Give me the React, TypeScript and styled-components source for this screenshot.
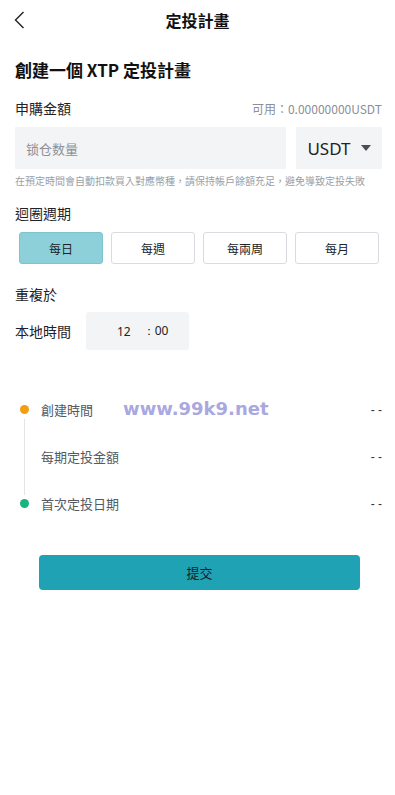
import { useState } from "react";
import styled, { createGlobalStyle } from "styled-components";

const GlobalStyle = createGlobalStyle`
  body {
    margin: 0;
    background: #ffffff;
    font-family: "Noto Sans CJK TC", "Noto Sans", sans-serif;
    color: #1f2329;
  }
`;

const Page = styled.div`
  width: 395px;
  min-height: 795px;
  background: #fff;
`;

const Header = styled.header`
  height: 40px;
  display: flex;
  align-items: center;
  justify-content: center;
  position: relative;
`;

const BackButton = styled.button`
  position: absolute;
  left: 8px;
  top: 8px;
  width: 24px;
  height: 24px;
  padding: 0;
  border: none;
  background: none;
  display: flex;
  align-items: center;
  justify-content: center;
`;

const Title = styled.h1`
  margin: 0;
  font-size: 16px;
  font-weight: 700;
  color: #111;
`;

const Body = styled.div`
  padding: 0 13px 0 15px;
  display: flex;
  flex-direction: column;
`;

const Heading = styled.h2`
  margin: 17px 0 0;
  font-size: 17px;
  font-weight: 700;
  line-height: 26px;
  color: #111;
`;

const LabelRow = styled.div<{ $top: number }>`
  display: flex;
  justify-content: space-between;
  align-items: center;
  margin-top: ${(p) => p.$top}px;
  height: 22px;
`;

const Label = styled.span`
  font-size: 14px;
  color: #1f2329;
`;

const Available = styled.span`
  font-size: 12px;
  color: #8a8f99;
`;

const InputRow = styled.div`
  display: flex;
  gap: 10px;
  margin-top: 8px;
`;

const AmountInput = styled.input`
  flex: 1;
  height: 42px;
  box-sizing: border-box;
  border: none;
  outline: none;
  background: #f3f4f6;
  padding: 0 11px;
  font-size: 13px;
  font-family: inherit;
  color: #333;
  &::placeholder {
    color: #8d9096;
  }
`;

const CurrencySelect = styled.div`
  width: 86px;
  height: 42px;
  background: #f3f4f6;
  display: flex;
  align-items: center;
  justify-content: center;
  gap: 10px;
  font-size: 17px;
  font-family: "Noto Sans", sans-serif;
  color: #222;
`;

const Caret = styled.span`
  width: 0;
  height: 0;
  border-left: 5px solid transparent;
  border-right: 5px solid transparent;
  border-top: 6px solid #4a4f57;
`;

const Hint = styled.p`
  margin: 5px 0 0;
  font-size: 10px;
  color: #9a9ea5;
  line-height: 14px;
  white-space: nowrap;
`;

const PeriodRow = styled.div`
  display: grid;
  grid-template-columns: repeat(4, 84px);
  gap: 8px;
  margin-top: 8px;
  padding-left: 4px;
`;

const PeriodButton = styled.button<{ $active: boolean }>`
  height: 32px;
  box-sizing: border-box;
  border-radius: 3px;
  border: 1px solid ${(p) => (p.$active ? "#7fc3ce" : "#d9dbe0")};
  background: ${(p) => (p.$active ? "#8dd0da" : "#fff")};
  font-size: 12px;
  font-family: inherit;
  color: #222;
  padding: 0;
`;

const TimeRow = styled.div`
  display: flex;
  align-items: center;
  gap: 15px;
  margin-top: 7px;
`;

const TimeBox = styled.div`
  width: 103px;
  height: 38px;
  background: #f3f4f6;
  border-radius: 3px;
  display: flex;
  align-items: center;
  font-size: 12px;
  font-family: "Noto Sans", sans-serif;
  color: #222;
  padding-left: 31px;
  box-sizing: border-box;
  gap: 12px;
`;

const Timeline = styled.div`
  margin-top: 36px;
  display: flex;
  flex-direction: column;
`;

const TimelineItem = styled.div`
  height: 47px;
  display: flex;
  align-items: center;
  position: relative;
  padding-left: 26px;
`;

const Dot = styled.span<{ $color: string }>`
  position: absolute;
  left: 5px;
  top: 50%;
  width: 9px;
  height: 9px;
  margin-top: -4.5px;
  border-radius: 50%;
  background: ${(p) => p.$color};
`;

const Line = styled.span`
  position: absolute;
  left: 9px;
  top: 33px;
  height: 76px;
  width: 1px;
  background: #e3e4e8;
`;

const ItemLabel = styled.span`
  font-size: 13px;
  color: #555a62;
  flex: 1;
`;

const ItemValue = styled.span`
  font-size: 12px;
  font-family: "Liberation Sans", sans-serif;
  color: #333;
  white-space: pre;
`;

const Watermark = styled.span`
  position: absolute;
  left: 108px;
  top: 50%;
  transform: translateY(-55%);
  font-family: "DejaVu Sans", sans-serif;
  font-weight: 700;
  font-size: 18px;
  color: #a9a8e0;
`;

const SubmitButton = styled.button`
  margin: 28px 22px 0 24px;
  height: 35px;
  border: none;
  border-radius: 4px;
  background: #1fa2b3;
  color: #1b1b1b;
  font-size: 13px;
  font-family: inherit;
`;

const periods = ["每日", "每週", "每兩周", "每月"];

export default function App() {
  const [period, setPeriod] = useState(0);

  return (
    <Page>
      <GlobalStyle />
      <Header>
        <BackButton aria-label="back">
          <svg width="14" height="20" viewBox="0 0 14 20">
            <path d="M10.5 2 L2.5 10 L10.5 18" fill="none" stroke="#222" strokeWidth="1.4" />
          </svg>
        </BackButton>
        <Title>定投計畫</Title>
      </Header>
      <Body>
        <Heading>創建一個 XTP 定投計畫</Heading>

        <LabelRow $top={14}>
          <Label>申購金額</Label>
          <Available>可用：0.00000000USDT</Available>
        </LabelRow>
        <InputRow>
          <AmountInput placeholder="锁仓数量" />
          <CurrencySelect>
            USDT
            <Caret />
          </CurrencySelect>
        </InputRow>
        <Hint>在預定時間會自動扣款買入對應幣種，請保持帳戶餘額充足，避免導致定投失敗</Hint>

        <LabelRow $top={14}>
          <Label>迴圈週期</Label>
        </LabelRow>
        <PeriodRow>
          {periods.map((p, i) => (
            <PeriodButton key={p} $active={i === period} onClick={() => setPeriod(i)}>
              {p}
            </PeriodButton>
          ))}
        </PeriodRow>

        <LabelRow $top={19}>
          <Label>重複於</Label>
        </LabelRow>
        <TimeRow>
          <Label>本地時間</Label>
          <TimeBox>
            <span>12</span>
            <span>：00</span>
          </TimeBox>
        </TimeRow>

        <Timeline>
          <TimelineItem>
            <Dot $color="#f29d12" />
            <Line />
            <ItemLabel>創建時間</ItemLabel>
            <Watermark>www.99k9.net</Watermark>
            <ItemValue>- -</ItemValue>
          </TimelineItem>
          <TimelineItem>
            <ItemLabel>每期定投金額</ItemLabel>
            <ItemValue>- -</ItemValue>
          </TimelineItem>
          <TimelineItem>
            <Dot $color="#17b380" />
            <ItemLabel>首次定投日期</ItemLabel>
            <ItemValue>- -</ItemValue>
          </TimelineItem>
        </Timeline>

        <SubmitButton>提交</SubmitButton>
      </Body>
    </Page>
  );
}
